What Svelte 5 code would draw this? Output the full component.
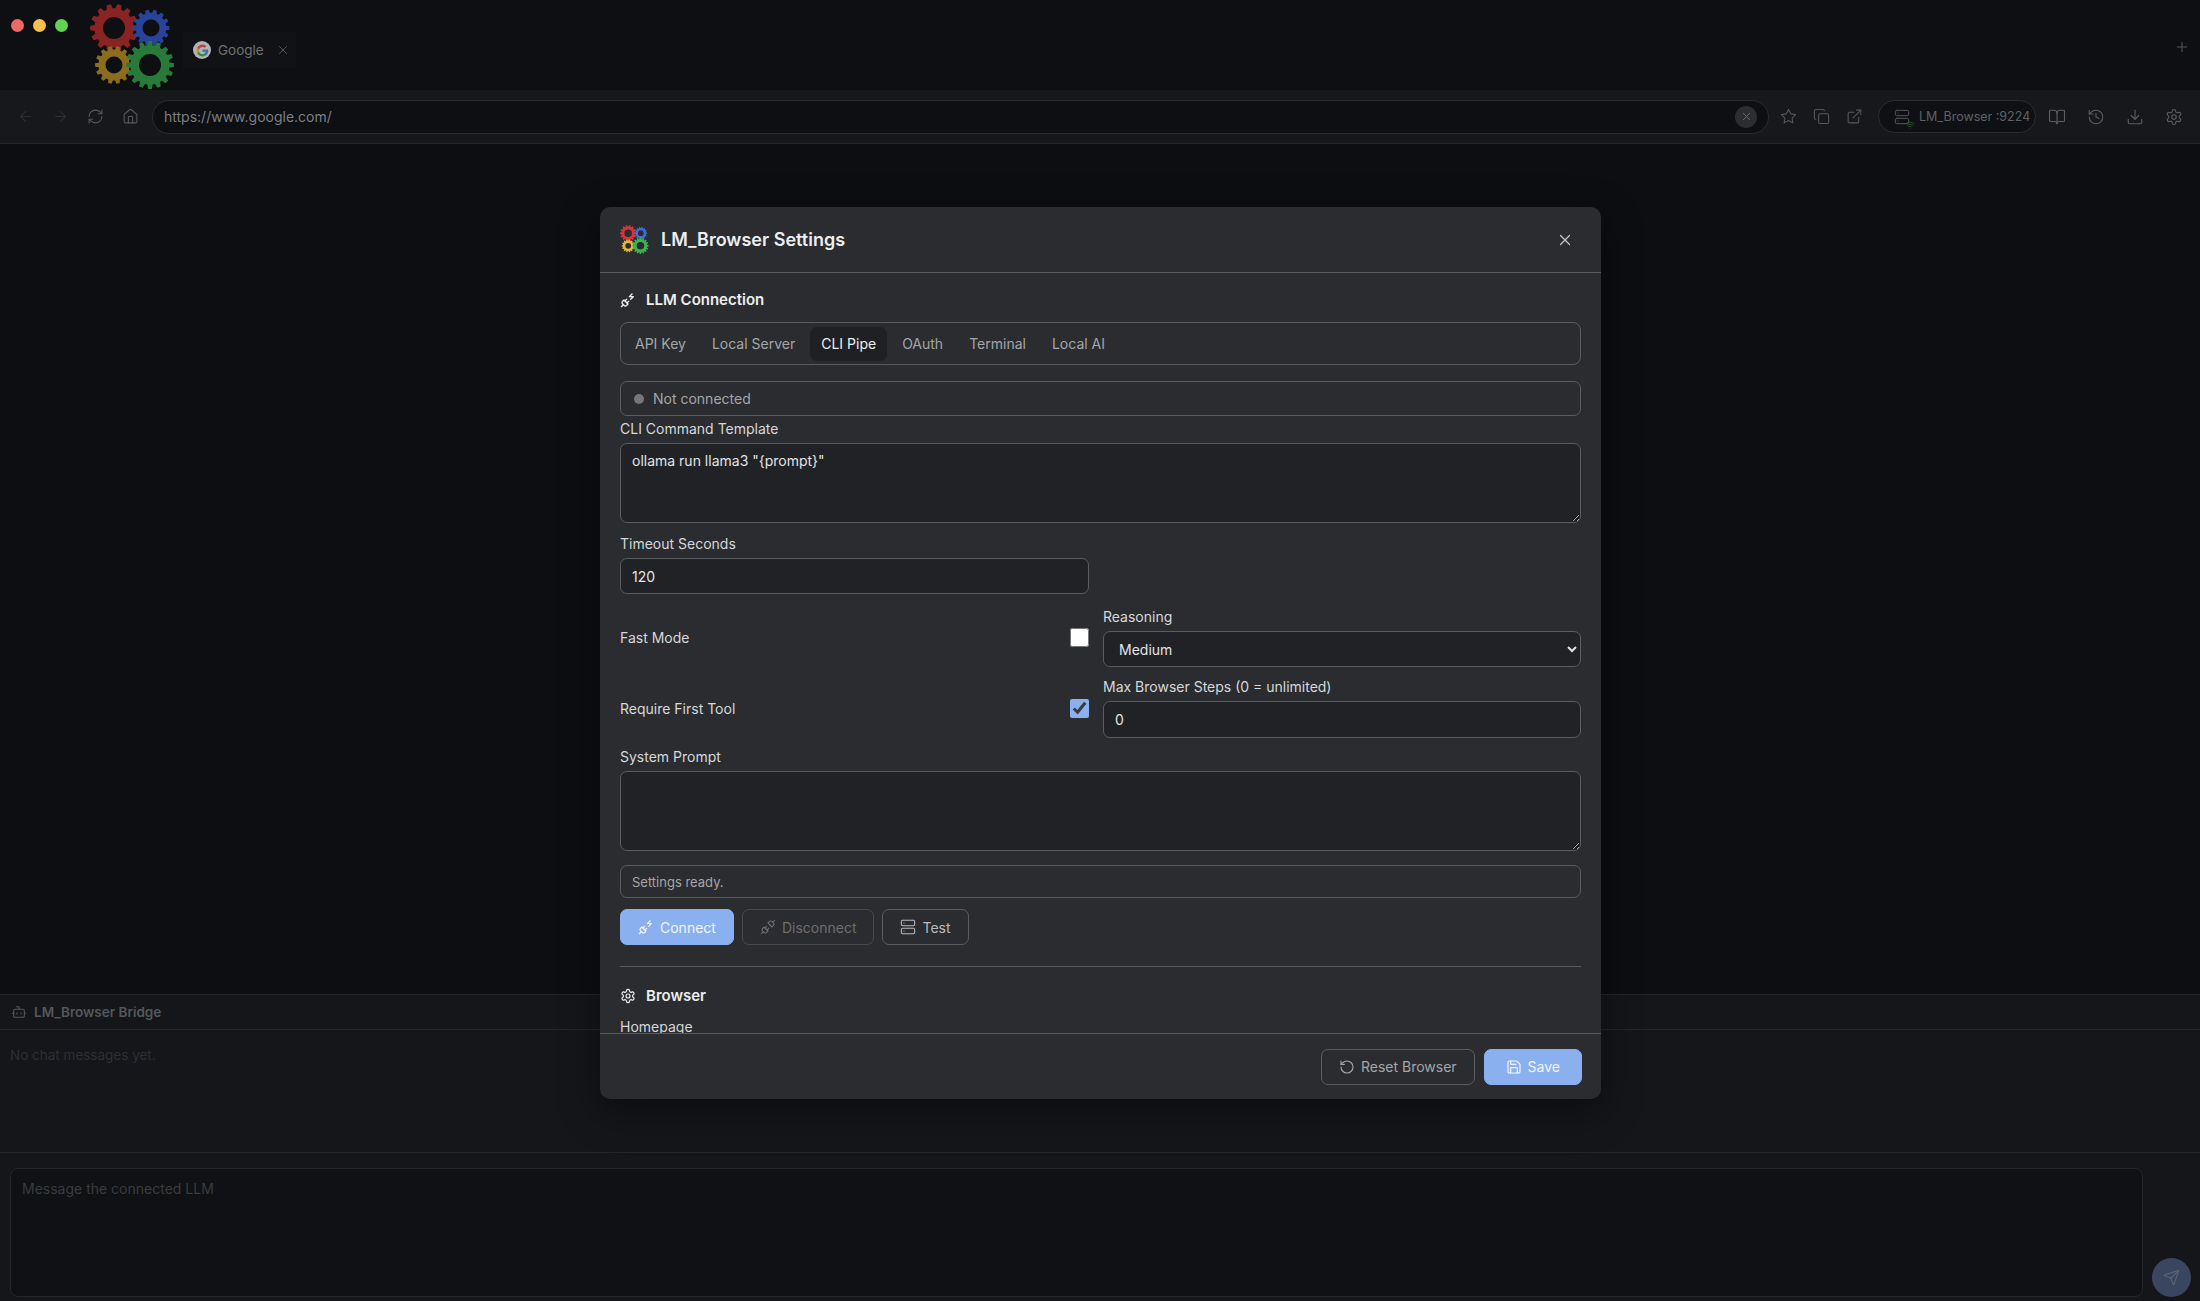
<script>
  const tabs = ["API Key", "Local Server", "CLI Pipe", "OAuth", "Terminal", "Local AI"];
  let activeTab = $state("CLI Pipe");

  const icons = {
    back: ["M12 19l-7-7 7-7", "M19 12H5"],
    forward: ["M5 12h14", "M12 5l7 7-7 7"],
    reload: ["M3 12a9 9 0 0 1 9-9 9.75 9.75 0 0 1 6.74 2.74L21 8", "M21 3v5h-5", "M21 12a9 9 0 0 1-9 9 9.75 9.75 0 0 1-6.74-2.74L3 16", "M8 16H3v5"],
    home: ["M15 21v-8a1 1 0 0 0-1-1h-4a1 1 0 0 0-1 1v8", "M3 10a2 2 0 0 1 .709-1.528l7-5.999a2 2 0 0 1 2.582 0l7 5.999A2 2 0 0 1 21 10v9a2 2 0 0 1-2 2H5a2 2 0 0 1-2-2z"],
    x: ["M18 6 6 18", "M6 6l12 12"],
    plus: ["M5 12h14", "M12 5v14"],
    star: ["M12 2l3.09 6.26L22 9.27l-5 4.87 1.18 6.88L12 17.77l-6.18 3.25L7 14.14 2 9.27l6.91-1.01L12 2z"],
    copy: ["M10 8h10a2 2 0 0 1 2 2v10a2 2 0 0 1-2 2H10a2 2 0 0 1-2-2V10a2 2 0 0 1 2-2z", "M4 16c-1.1 0-2-.9-2-2V4c0-1.1.9-2 2-2h10c1.1 0 2 .9 2 2"],
    external: ["M15 3h6v6", "M10 14 21 3", "M18 13v6a2 2 0 0 1-2 2H5a2 2 0 0 1-2-2V8a2 2 0 0 1 2-2h6"],
    server: ["M4 2h16a2 2 0 0 1 2 2v4a2 2 0 0 1-2 2H4a2 2 0 0 1-2-2V4a2 2 0 0 1 2-2z", "M4 14h16a2 2 0 0 1 2 2v4a2 2 0 0 1-2 2H4a2 2 0 0 1-2-2v-4a2 2 0 0 1 2-2z", "M6 6h.01", "M6 18h.01"],
    wifi: ["M12 20h.01", "M2 8.82a15 15 0 0 1 20 0", "M5 12.859a10 10 0 0 1 14 0", "M8.5 16.429a5 5 0 0 1 7 0"],
    book: ["M12 7v14", "M3 18a1 1 0 0 1-1-1V4a1 1 0 0 1 1-1h5a4 4 0 0 1 4 4 4 4 0 0 1 4-4h5a1 1 0 0 1 1 1v13a1 1 0 0 1-1 1h-6a3 3 0 0 0-3 3 3 3 0 0 0-3-3z"],
    history: ["M3 12a9 9 0 1 0 9-9 9.75 9.75 0 0 0-6.74 2.74L3 8", "M3 3v5h5", "M12 7v5l4 2"],
    download: ["M21 15v4a2 2 0 0 1-2 2H5a2 2 0 0 1-2-2v-4", "M7 10l5 5 5-5", "M12 15V3"],
    settings: ["M12.22 2h-.44a2 2 0 0 0-2 2v.18a2 2 0 0 1-1 1.73l-.43.25a2 2 0 0 1-2 0l-.15-.08a2 2 0 0 0-2.73.73l-.22.38a2 2 0 0 0 .73 2.73l.15.1a2 2 0 0 1 1 1.72v.51a2 2 0 0 1-1 1.74l-.15.09a2 2 0 0 0-.73 2.73l.22.38a2 2 0 0 0 2.73.73l.15-.08a2 2 0 0 1 2 0l.43.25a2 2 0 0 1 1 1.73V20a2 2 0 0 0 2 2h.44a2 2 0 0 0 2-2v-.18a2 2 0 0 1 1-1.73l.43-.25a2 2 0 0 1 2 0l.15.08a2 2 0 0 0 2.73-.73l.22-.39a2 2 0 0 0-.73-2.73l-.15-.08a2 2 0 0 1-1-1.74v-.5a2 2 0 0 1 1-1.74l.15-.09a2 2 0 0 0 .73-2.73l-.22-.38a2 2 0 0 0-2.73-.73l-.15.08a2 2 0 0 1-2 0l-.43-.25a2 2 0 0 1-1-1.73V4a2 2 0 0 0-2-2z", "M15 12a3 3 0 1 1-6 0 3 3 0 0 1 6 0z"],
    plugzap: ["M6.3 20.3a2.4 2.4 0 0 0 3.4 0L12 18l-6-6-2.3 2.3a2.4 2.4 0 0 0 0 3.4Z", "m2 22 3-3", "M7.5 13.5 10 11", "M10.5 16.5 13 14", "m18 3-4 4h6l-4 4"],
    unplug: ["m19 5 3-3", "m2 22 3-3", "M6.3 20.3a2.4 2.4 0 0 0 3.4 0L12 18l-6-6-2.3 2.3a2.4 2.4 0 0 0 0 3.4Z", "M7.5 13.5 10 11", "M10.5 16.5 13 14", "m12 6 6 6 2.3-2.3a2.4 2.4 0 0 0 0-3.4l-2.6-2.6a2.4 2.4 0 0 0-3.4 0Z"],
    reset: ["M3 12a9 9 0 1 0 9-9 9.75 9.75 0 0 0-6.74 2.74L3 8", "M3 3v5h5"],
    save: ["M15.2 3a2 2 0 0 1 1.4.6l3.8 3.8a2 2 0 0 1 .6 1.4V19a2 2 0 0 1-2 2H5a2 2 0 0 1-2-2V5a2 2 0 0 1 2-2z", "M17 21v-7a1 1 0 0 0-1-1H8a1 1 0 0 0-1 1v7", "M7 3v4a1 1 0 0 0 1 1h7"],
    bot: ["M12 8V4H8", "M6 8h12a2 2 0 0 1 2 2v8a2 2 0 0 1-2 2H6a2 2 0 0 1-2-2v-8a2 2 0 0 1 2-2z", "M2 14h2", "M20 14h2", "M15 13v2", "M9 13v2"],
    send: ["M14.536 21.686a.5.5 0 0 0 .937-.024l6.5-19a.496.496 0 0 0-.635-.635l-19 6.5a.5.5 0 0 0-.024.937l7.93 3.18a2 2 0 0 1 1.112 1.11z", "m21.854 2.147-10.94 10.939"],
  };

  // one gear as a toothed ring, hole cut with evenodd
  function gearPath(cx, cy, outer, hole, teeth) {
    const root = outer * 0.82;
    const step = (Math.PI * 2) / teeth;
    let d = "";
    for (let i = 0; i < teeth; i++) {
      const a = i * step;
      const pts = [
        [root, a - step * 0.34],
        [outer, a - step * 0.2],
        [outer, a + step * 0.2],
        [root, a + step * 0.34],
      ];
      for (const [r, t] of pts) {
        d += (d ? "L" : "M") + (cx + r * Math.cos(t)).toFixed(2) + " " + (cy + r * Math.sin(t)).toFixed(2);
      }
    }
    d += `ZM${cx + hole} ${cy}a${hole} ${hole} 0 1 0 ${-2 * hole} 0a${hole} ${hole} 0 1 0 ${2 * hole} 0Z`;
    return d;
  }

  const gears = [
    { d: gearPath(24, 24, 24, 11, 14) },
    { d: gearPath(61, 24, 18.5, 8.5, 14) },
    { d: gearPath(24, 61, 19, 8.5, 14) },
    { d: gearPath(60, 61, 24, 11, 16) },
  ];
  const dimColors = ["#8a2323", "#27439a", "#8c6c1e", "#287a3a"];
  const liveColors = ["#d4353b", "#3e70dd", "#e4b73a", "#3db34f"];
</script>

{#snippet icon(name, size = 16, width = 2)}
  <svg class="ico" viewBox="0 0 24 24" style="width:{size}px;height:{size}px" fill="none" stroke="currentColor" stroke-width={width} stroke-linecap="round" stroke-linejoin="round">
    {#each icons[name] as d}
      <path {d} />
    {/each}
  </svg>
{/snippet}

{#snippet gearLogo(colors, size)}
  <svg viewBox="0 0 85 85" style="width:{size}px;height:{size}px;display:block">
    {#each gears as gear, i}
      <path d={gear.d} fill={colors[i]} fill-rule="evenodd" />
    {/each}
  </svg>
{/snippet}

<div class="window">
  <header class="titlebar">
    <div class="lights">
      <span class="light red"></span>
      <span class="light yellow"></span>
      <span class="light green"></span>
    </div>
    <div class="brand">{@render gearLogo(dimColors, 85)}</div>
    <div class="tab">
      <span class="favicon">
        <svg viewBox="0 0 24 24" width="13" height="13">
          <path fill="#3f6db8" d="M22.56 12.25c0-.78-.07-1.53-.2-2.25H12v4.26h5.92c-.26 1.37-1.04 2.53-2.21 3.31v2.77h3.57c2.08-1.92 3.28-4.74 3.28-8.09z" />
          <path fill="#3a8a4e" d="M12 23c2.97 0 5.46-.98 7.28-2.66l-3.57-2.77c-.98.66-2.23 1.06-3.71 1.06-2.86 0-5.29-1.93-6.16-4.53H2.18v2.84C3.99 20.53 7.7 23 12 23z" />
          <path fill="#b8962c" d="M5.84 14.09c-.22-.66-.35-1.36-.35-2.09s.13-1.43.35-2.09V7.07H2.18C1.43 8.55 1 10.22 1 12s.43 3.45 1.18 4.93l2.85-2.22.81-.62z" />
          <path fill="#b5473c" d="M12 5.38c1.62 0 3.06.56 4.21 1.64l3.15-3.15C17.45 2.09 14.97 1 12 1 7.7 1 3.99 3.47 2.18 7.07l3.66 2.84c.87-2.6 3.3-4.53 6.16-4.53z" />
        </svg>
      </span>
      <span class="tab-title">Google</span>
      <span class="tab-close">{@render icon("x", 14, 1.5)}</span>
    </div>
    <span class="new-tab">{@render icon("plus", 16, 1.5)}</span>
  </header>

  <nav class="toolbar">
    <span class="nav-btn off">{@render icon("back", 17, 1.5)}</span>
    <span class="nav-btn off">{@render icon("forward", 17, 1.5)}</span>
    <span class="nav-btn">{@render icon("reload", 17, 1.5)}</span>
    <span class="nav-btn">{@render icon("home", 17, 1.5)}</span>
    <div class="urlbar">
      <span class="url">https://www.google.com/</span>
      <span class="url-clear">{@render icon("x", 13, 1.6)}</span>
    </div>
    <div class="actions">
      <span class="act">{@render icon("star", 17, 1.5)}</span>
      <span class="act">{@render icon("copy", 17, 1.5)}</span>
      <span class="act">{@render icon("external", 17, 1.5)}</span>
    </div>
    <div class="bridge-pill">
      <span class="pill-ico">
        {@render icon("server", 16, 1.5)}
        <span class="pill-wifi">{@render icon("wifi", 10, 1.6)}</span>
      </span>
      <span>LM_Browser :9224</span>
    </div>
    <div class="tools">
      <span class="tool">{@render icon("book", 18, 1.5)}</span>
      <span class="tool">{@render icon("history", 18, 1.5)}</span>
      <span class="tool">{@render icon("download", 18, 1.5)}</span>
      <span class="tool">{@render icon("settings", 18, 1.5)}</span>
    </div>
  </nav>

  <main class="viewport"></main>

  <section class="chat">
    <div class="chat-head">
      {@render icon("bot", 16, 1.6)}
      <span>LM_Browser Bridge</span>
    </div>
    <div class="chat-log">No chat messages yet.</div>
    <div class="composer">
      <textarea class="composer-input" placeholder="Message the connected LLM"></textarea>
      <button class="send">{@render icon("send", 17, 1.5)}</button>
    </div>
  </section>

  <div class="modal">
    <div class="modal-head">
      <div class="modal-logo">{@render gearLogo(liveColors, 29)}</div>
      <h2>LM_Browser Settings</h2>
      <span class="modal-close">{@render icon("x", 18, 1.6)}</span>
    </div>

    <div class="modal-body">
      <div class="sec-title">{@render icon("plugzap", 16, 2)}<span>LLM Connection</span></div>

      <div class="tabs">
        {#each tabs as t}
          <button class="tab-btn" class:active={activeTab === t} onclick={() => (activeTab = t)}>{t}</button>
        {/each}
      </div>

      <div class="status"><span class="dot"></span>Not connected</div>

      <label class="lbl first" for="cli">CLI Command Template</label>
      <textarea id="cli" class="field area">ollama run llama3 "&#123;prompt&#125;"</textarea>

      <label class="lbl" for="timeout">Timeout Seconds</label>
      <div class="half"><input id="timeout" class="field line" value="120" /></div>

      <div class="grid">
        <div class="toggle">
          <span>Fast Mode</span>
          <input type="checkbox" />
        </div>
        <div>
          <label class="lbl flat" for="reasoning">Reasoning</label>
          <select id="reasoning" class="field line select">
            <option>Medium</option>
          </select>
        </div>
        <div class="toggle">
          <span>Require First Tool</span>
          <input type="checkbox" checked />
        </div>
        <div>
          <label class="lbl flat" for="steps">Max Browser Steps (0 = unlimited)</label>
          <input id="steps" class="field line tall" value="0" />
        </div>
      </div>

      <label class="lbl sys" for="system">System Prompt</label>
      <textarea id="system" class="field area"></textarea>

      <div class="notice">Settings ready.</div>

      <div class="btn-row">
        <button class="btn primary">{@render icon("plugzap", 16, 1.8)}Connect</button>
        <button class="btn off">{@render icon("unplug", 16, 1.6)}Disconnect</button>
        <button class="btn">{@render icon("server", 16, 1.6)}Test</button>
      </div>

      <hr />

      <div class="sec-title browser">{@render icon("settings", 16, 1.8)}<span>Browser</span></div>
      <label class="lbl home-lbl" for="homepage">Homepage</label>
      <input id="homepage" class="field line" value="https://www.google.com/" />
    </div>

    <div class="modal-foot">
      <button class="btn reset">{@render icon("reset", 16, 1.7)}Reset Browser</button>
      <button class="btn primary save">{@render icon("save", 16, 1.8)}Save</button>
    </div>
  </div>
</div>

<style>
  :global(body) {
    margin: 0;
    background: #0d0e11;
  }
  .window {
    position: relative;
    width: 2200px;
    height: 1301px;
    overflow: hidden;
    display: flex;
    flex-direction: column;
    background: #0d0e11;
    font-family: Inter, "Liberation Sans", sans-serif;
    color: #8a8c90;
  }
  .ico {
    display: block;
    flex: none;
  }

  /* title bar */
  .titlebar {
    height: 90px;
    flex: none;
    display: flex;
    align-items: flex-start;
    background: #0e0f12;
  }
  .lights {
    display: flex;
    gap: 9px;
    margin: 19px 0 0 11px;
  }
  .light {
    width: 13px;
    height: 13px;
    border-radius: 50%;
  }
  .red { background: #ec6a66; }
  .yellow { background: #f5c04f; }
  .green { background: #62d154; }
  .brand {
    margin: 4px 0 0 22px;
  }
  .tab {
    margin: 32px 0 0 8px;
    width: 113px;
    height: 36px;
    display: flex;
    align-items: center;
    background: #111215;
    font-size: 13.5px;
    color: #6f7174;
  }
  .favicon {
    width: 18px;
    height: 18px;
    margin-left: 10px;
    border-radius: 50%;
    background: #b4b4b4;
    display: flex;
    align-items: center;
    justify-content: center;
  }
  .tab-title {
    margin-left: 7px;
  }
  .tab-close {
    margin-left: 12px;
    color: #5c5e62;
  }
  .new-tab {
    margin: 39px 10px 0 auto;
    color: #55575b;
  }

  /* toolbar */
  .toolbar {
    height: 53px;
    flex: none;
    display: flex;
    align-items: center;
    padding: 0 6.5px 0 8px;
    background: #17181b;
    border-bottom: 1px solid #28292c;
    box-sizing: content-box;
  }
  .nav-btn {
    width: 35px;
    display: flex;
    justify-content: center;
    color: #56585b;
  }
  .nav-btn.off {
    color: #2d2f32;
  }
  .urlbar {
    flex: 1;
    height: 34px;
    margin-left: 4px;
    display: flex;
    align-items: center;
    justify-content: space-between;
    padding: 0 11px 0 11px;
    box-sizing: border-box;
    background: #0e0f12;
    border: 1px solid #2a2c2f;
    border-radius: 17px;
  }
  .url {
    font-size: 14px;
    color: #7c7e82;
  }
  .url-clear {
    width: 22px;
    height: 22px;
    border-radius: 50%;
    background: #2b2d30;
    color: #6c6e72;
    display: flex;
    align-items: center;
    justify-content: center;
  }
  .actions {
    display: flex;
    margin-left: 3px;
  }
  .act {
    width: 33px;
    display: flex;
    justify-content: center;
    color: #55575b;
  }
  .bridge-pill {
    margin-left: 7px;
    width: 158px;
    height: 33px;
    box-sizing: border-box;
    display: flex;
    align-items: center;
    gap: 9px;
    padding-left: 15px;
    background: #0f1013;
    border: 1px solid #2a2c2f;
    border-radius: 17px;
    font-size: 12.5px;
    color: #5e6064;
    white-space: nowrap;
  }
  .pill-ico {
    position: relative;
    color: #55575b;
  }
  .pill-wifi {
    position: absolute;
    right: -5px;
    bottom: -5px;
    color: #2f6b34;
  }
  .tools {
    display: flex;
    margin-left: 1.5px;
  }
  .tool {
    width: 39px;
    display: flex;
    justify-content: center;
    color: #5b5d61;
  }

  .viewport {
    flex: 1;
  }

  /* chat panel behind the dialog */
  .chat {
    height: 307px;
    flex: none;
    box-sizing: border-box;
    display: flex;
    flex-direction: column;
    background: #14161a;
    border-top: 1px solid #26272a;
  }
  .chat-head {
    height: 34px;
    flex: none;
    display: flex;
    align-items: center;
    gap: 7px;
    padding-left: 11px;
    border-bottom: 1px solid #26272a;
    font-size: 13.5px;
    font-weight: 600;
    color: #55575b;
  }
  .chat-log {
    height: 123px;
    flex: none;
    box-sizing: border-box;
    padding: 17px 10px;
    border-bottom: 1px solid #26272a;
    font-size: 13.5px;
    line-height: 17px;
    color: #2e3033;
  }
  .composer {
    flex: 1;
    display: flex;
    align-items: flex-end;
    gap: 9px;
    padding: 14px 9px 4px 10px;
  }
  .composer-input {
    flex: 1;
    height: 129px;
    box-sizing: border-box;
    padding: 11px 11px;
    resize: none;
    background: #101114;
    border: 1px solid #26272a;
    border-radius: 8px;
    font: 14px/18px Inter, sans-serif;
    outline: none;
  }
  .composer-input::placeholder {
    color: #3a3c3f;
  }
  .send {
    width: 39px;
    height: 39px;
    flex: none;
    padding: 0;
    border: 0;
    border-radius: 50%;
    background: #3a4560;
    color: #5d6675;
    display: flex;
    align-items: center;
    justify-content: center;
  }

  /* settings dialog */
  .modal {
    position: absolute;
    left: 600px;
    top: 207px;
    width: 1001px;
    height: 892px;
    display: flex;
    flex-direction: column;
    background: #2a2c2f;
    border-radius: 10px;
    overflow: hidden;
    color: #d6d8db;
    font-size: 14px;
    box-shadow: 0 12px 40px rgba(0, 0, 0, 0.45);
  }
  .modal-head {
    height: 65px;
    flex: none;
    display: flex;
    align-items: center;
    gap: 12px;
    padding: 0 27px 0 20px;
    border-bottom: 1px solid #5a5c5f;
    box-sizing: content-box;
  }
  .modal-head h2 {
    margin: 0;
    font-size: 18px;
    font-weight: 600;
    color: #eceef0;
    white-space: nowrap;
  }
  .modal-close {
    margin-left: auto;
    color: #c4c6c9;
  }
  .modal-body {
    flex: 1;
    min-height: 0;
    overflow-y: scroll;
    padding: 17px 20px 260px;
  }
  .modal-body::-webkit-scrollbar {
    width: 8px;
  }
  .modal-body::-webkit-scrollbar-track {
    background: transparent;
  }
  .modal-body::-webkit-scrollbar-thumb {
    background: #66686b;
    border-radius: 4px;
  }
  .sec-title {
    display: flex;
    align-items: center;
    gap: 10px;
    font-size: 15px;
    line-height: 20px;
    font-weight: 600;
    color: #eceef0;
  }
  .tabs {
    margin-top: 12px;
    height: 43px;
    box-sizing: border-box;
    display: flex;
    align-items: center;
    gap: 4px;
    padding: 0 3px;
    border: 1px solid #5a5c5f;
    border-radius: 8px;
  }
  .tab-btn {
    height: 34px;
    padding: 0 11px;
    background: transparent;
    border: 0;
    border-radius: 7px;
    font: inherit;
    color: #a4a6a9;
  }
  .tab-btn.active {
    background: #1e2023;
    color: #eceef0;
  }
  .status {
    margin-top: 16px;
    height: 35px;
    box-sizing: border-box;
    display: flex;
    align-items: center;
    gap: 9px;
    padding-left: 13px;
    background: #2a2c2f;
    border: 1px solid #5a5c5f;
    border-radius: 7px;
    font-size: 14px;
    color: #a4a6a9;
  }
  .dot {
    width: 10px;
    height: 10px;
    border-radius: 50%;
    background: #75777a;
  }
  .lbl {
    display: block;
    margin: 12px 0 6px;
    line-height: 17px;
    color: #d6d8db;
  }
  .lbl.first {
    margin-top: 4px;
  }
  .lbl.flat {
    margin-top: 0;
  }
  .lbl.sys {
    margin-top: 10px;
  }
  .field {
    display: block;
    width: 100%;
    box-sizing: border-box;
    background: #202225;
    border: 1px solid #5a5c5f;
    border-radius: 7px;
    font: 14px/18px Inter, "Liberation Sans", sans-serif;
    color: #e2e4e7;
    outline: none;
  }
  .area {
    height: 80px;
    padding: 8px 11px;
    color-scheme: dark;
  }
  .line {
    height: 36px;
    padding: 0 11px;
  }
  .line.tall {
    height: 37px;
  }
  .select {
    color-scheme: dark;
    padding-left: 11px;
  }
  .half {
    width: 469px;
  }
  .grid {
    margin-top: 14px;
    display: grid;
    grid-template-columns: 469px 1fr;
    column-gap: 14px;
    row-gap: 11px;
  }
  .toggle {
    display: flex;
    align-items: center;
    justify-content: space-between;
  }
  .toggle input {
    width: 19px;
    height: 19px;
    margin: 0;
    accent-color: #8ab0f0;
  }
  .notice {
    margin-top: 14px;
    height: 33px;
    box-sizing: border-box;
    display: flex;
    align-items: center;
    padding-left: 11px;
    border: 1px solid #5a5c5f;
    border-radius: 7px;
    font-size: 13px;
    color: #a4a6a9;
  }
  .btn-row {
    margin-top: 11px;
    display: flex;
    gap: 8px;
  }
  .btn {
    height: 36px;
    box-sizing: border-box;
    display: inline-flex;
    align-items: center;
    gap: 6px;
    padding: 0 17px;
    background: transparent;
    border: 1px solid #5a5c5f;
    border-radius: 7px;
    font: 14px Inter, "Liberation Sans", sans-serif;
    color: #b8babd;
  }
  .btn.primary {
    background: #8ab0f0;
    border-color: #8ab0f0;
    color: #f2f5fb;
  }
  .btn.off {
    border-color: #47494c;
    color: #6c6e71;
  }
  hr {
    margin: 21px 0 0;
    border: 0;
    border-top: 1px solid #5a5c5f;
  }
  .sec-title.browser {
    margin-top: 19px;
  }
  .lbl.home-lbl {
    margin-top: 12px;
  }
  .modal-foot {
    height: 66px;
    flex: none;
    box-sizing: border-box;
    display: flex;
    align-items: center;
    justify-content: flex-end;
    gap: 9px;
    padding-right: 19px;
    border-top: 1px solid #5a5c5f;
  }
  .btn.reset {
    color: #a4a6a9;
  }
  .btn.save {
    padding: 0 21px;
  }
</style>
